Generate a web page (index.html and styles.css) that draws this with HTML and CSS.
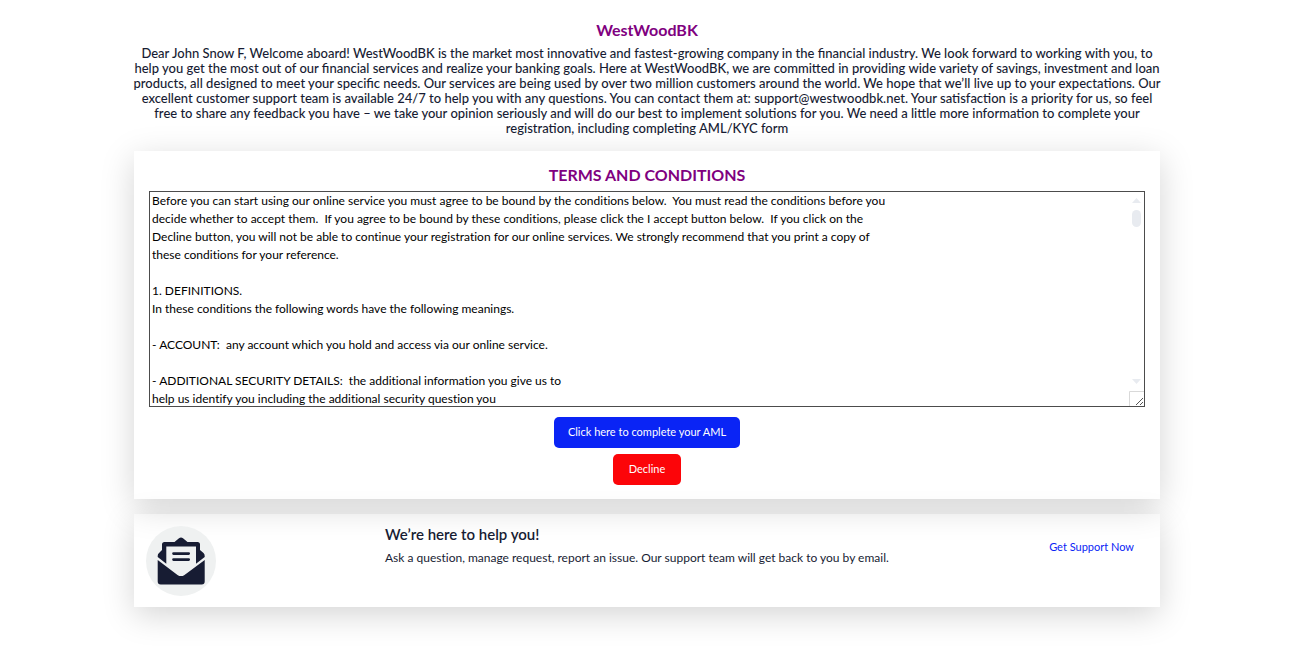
FILE: index.html
```html
<!DOCTYPE html>
<html lang="en">
<head>
<meta charset="utf-8">
<meta name="viewport" content="width=device-width, initial-scale=1">
<title>WestWoodBK</title>
<link rel="stylesheet" href="styles.css">
</head>
<body>
<main class="page">
  <header class="intro">
    <h1 class="heading">WestWoodBK</h1>
    <p class="welcome">Dear John Snow F, Welcome aboard! WestWoodBK is the market most innovative and fastest-growing company in the financial industry. We look forward to working with you, to<br>
    help you get the most out of our financial services and realize your banking goals. Here at WestWoodBK, we are committed in providing wide variety of savings, investment and loan<br>
    products, all designed to meet your specific needs. Our services are being used by over two million customers around the world. We hope that we’ll live up to your expectations. Our<br>
    excellent customer support team is available 24/7 to help you with any questions. You can contact them at: support@westwoodbk.net. Your satisfaction is a priority for us, so feel<br>
    free to share any feedback you have – we take your opinion seriously and will do our best to implement solutions for you. We need a little more information to complete your<br>
    registration, including completing AML/KYC form</p>
  </header>

  <section class="card terms">
    <h2 class="heading"><label for="terms">TERMS AND CONDITIONS</label></h2>
    <div class="terms-field">
      <textarea class="terms-text" id="terms" readonly>Before you can start using our online service you must agree to be bound by the conditions below.  You must read the conditions before you
decide whether to accept them.  If you agree to be bound by these conditions, please click the I accept button below.  If you click on the
Decline button, you will not be able to continue your registration for our online services. We strongly recommend that you print a copy of
these conditions for your reference.

1. DEFINITIONS.
In these conditions the following words have the following meanings.

- ACCOUNT:  any account which you hold and access via our online service.

- ADDITIONAL SECURITY DETAILS:  the additional information you give us to
help us identify you including the additional security question you</textarea>
      <div class="scrollbar" aria-hidden="true">
        <svg class="arrow" viewBox="0 0 9 5"><path d="M0 5 4.500 0 9 5z"/></svg>
        <span class="thumb"></span>
        <svg class="arrow arrow-down" viewBox="0 0 9 5"><path d="M0 0h9L4.500 5z"/></svg>
        <svg class="grip" viewBox="0 0 15 15"><path class="grip-edge" d="M.5 15V.5H15"/><path class="grip-lines" d="M7 14l7-7M11 14l3-3"/></svg>
      </div>
    </div>
    <div class="actions">
      <button class="button accept" type="button">Click here to complete your AML</button>
      <button class="button decline" type="button">Decline</button>
    </div>
  </section>

  <section class="card support">
    <svg class="support-icon" viewBox="0 0 70 70" aria-hidden="true">
      <circle cx="35" cy="35" r="35" fill="#eff1f1"/>
      <path fill="#171c33" d="M16 24V18.500Q16 16 18.500 16H28.500L33 12.300Q35 10.800 37 12.300L41.500 16H51.500Q54 16 54 18.500V24L57.500 27Q58.700 28.200 58.700 30V31L50 37.700V20.500H20.300V37.700L11.700 31V30Q11.700 28.200 13 27Z"/>
      <path fill="#171c33" d="M11.700 34 31.500 48.900Q35 51.300 38.500 48.900L58.700 34V55.500Q58.700 58.500 55.700 58.500H14.700Q11.700 58.500 11.700 55.500Z"/>
      <path fill="none" stroke="#171c33" stroke-width="2.700" stroke-linecap="round" d="M27.500 27.600H42.700M27.500 33.600H42.700"/>
    </svg>
    <div class="support-copy">
      <h3 class="support-title">We’re here to help you!</h3>
      <p class="support-text">Ask a question, manage request, report an issue. Our support team will get back to you by email.</p>
    </div>
    <a class="support-link" href="#">Get Support Now</a>
  </section>
</main>
</body>
</html>
```
FILE: styles.css
```css
* {
  box-sizing: border-box;
}

body {
  margin: 0;
  padding-right: 8px;
  background: #fff;
  color: #171c33;
  font: 400 12px/18px Lato, sans-serif;
  font-variant-ligatures: none;
}

h1,
h2,
h3,
p {
  margin: 0;
}

.page {
  max-width: 1026px;
  margin: 0 auto;
  padding: 20px 0 40px;
  display: flex;
  flex-direction: column;
  gap: 15px;
}

.intro {
  margin: 0 -12px;
  text-align: center;
}

.heading {
  color: purple;
  font-size: 16px;
  line-height: 20px;
  font-weight: 700;
  text-align: center;
}

.welcome {
  margin-top: 6px;
  font-size: 13px;
  line-height: 15px;
  font-weight: 500;
  font-variant-ligatures: normal;
}

.card {
  box-shadow: 0 8px 32px rgba(0, 0, 0, 0.17);
}

.terms {
  padding: 14px 15px;
}

.terms-field {
  position: relative;
  margin-top: 6px;
}

.terms-text {
  display: block;
  width: 100%;
  height: 216px;
  padding: 0 2px;
  border: 1px solid #4c4c4c;
  background: transparent;
  color: #000;
  font: inherit;
  font-variant-ligatures: none;
  resize: none;
  overflow: hidden;
}

.scrollbar {
  position: absolute;
  top: 1px;
  right: 1px;
  bottom: 1px;
  width: 15px;
  padding-top: 6px;
  display: flex;
  flex-direction: column;
  align-items: center;
}

.arrow {
  width: 9px;
  height: 5px;
  fill: #e8ebf0;
}

.thumb {
  width: 9px;
  height: 17px;
  margin-top: 7px;
  border-radius: 5px;
  background: #e8ebf0;
}

.arrow-down {
  margin-top: auto;
  margin-bottom: 7px;
}

.grip {
  width: 15px;
  height: 15px;
  fill: none;
}

.grip-edge {
  stroke: #d9d9d9;
}

.grip-lines {
  stroke: #555;
}

.actions {
  margin-top: 10px;
  display: flex;
  flex-direction: column;
  align-items: center;
  gap: 6px;
}

.button {
  padding: 6px 14px 7px;
  border: 0;
  border-radius: 5px;
  color: #fff;
  font: inherit;
  font-size: 11px;
}

.accept {
  background: #0a24f5;
}

.decline {
  padding: 6px 16px 7px;
  background: #fc0509;
}

.support {
  display: grid;
  grid-template-columns: 239px 1fr auto;
  padding: 12px 26px 11px 12px;
}

.support-icon {
  width: 70px;
  height: 70px;
}

.support-title {
  font-size: 15px;
  line-height: 16px;
  font-weight: 600;
}

.support-text {
  margin-top: 7px;
}

.support-link {
  margin-top: 12px;
  color: #0a24f5;
  font-size: 11px;
  text-decoration: none;
}
```
